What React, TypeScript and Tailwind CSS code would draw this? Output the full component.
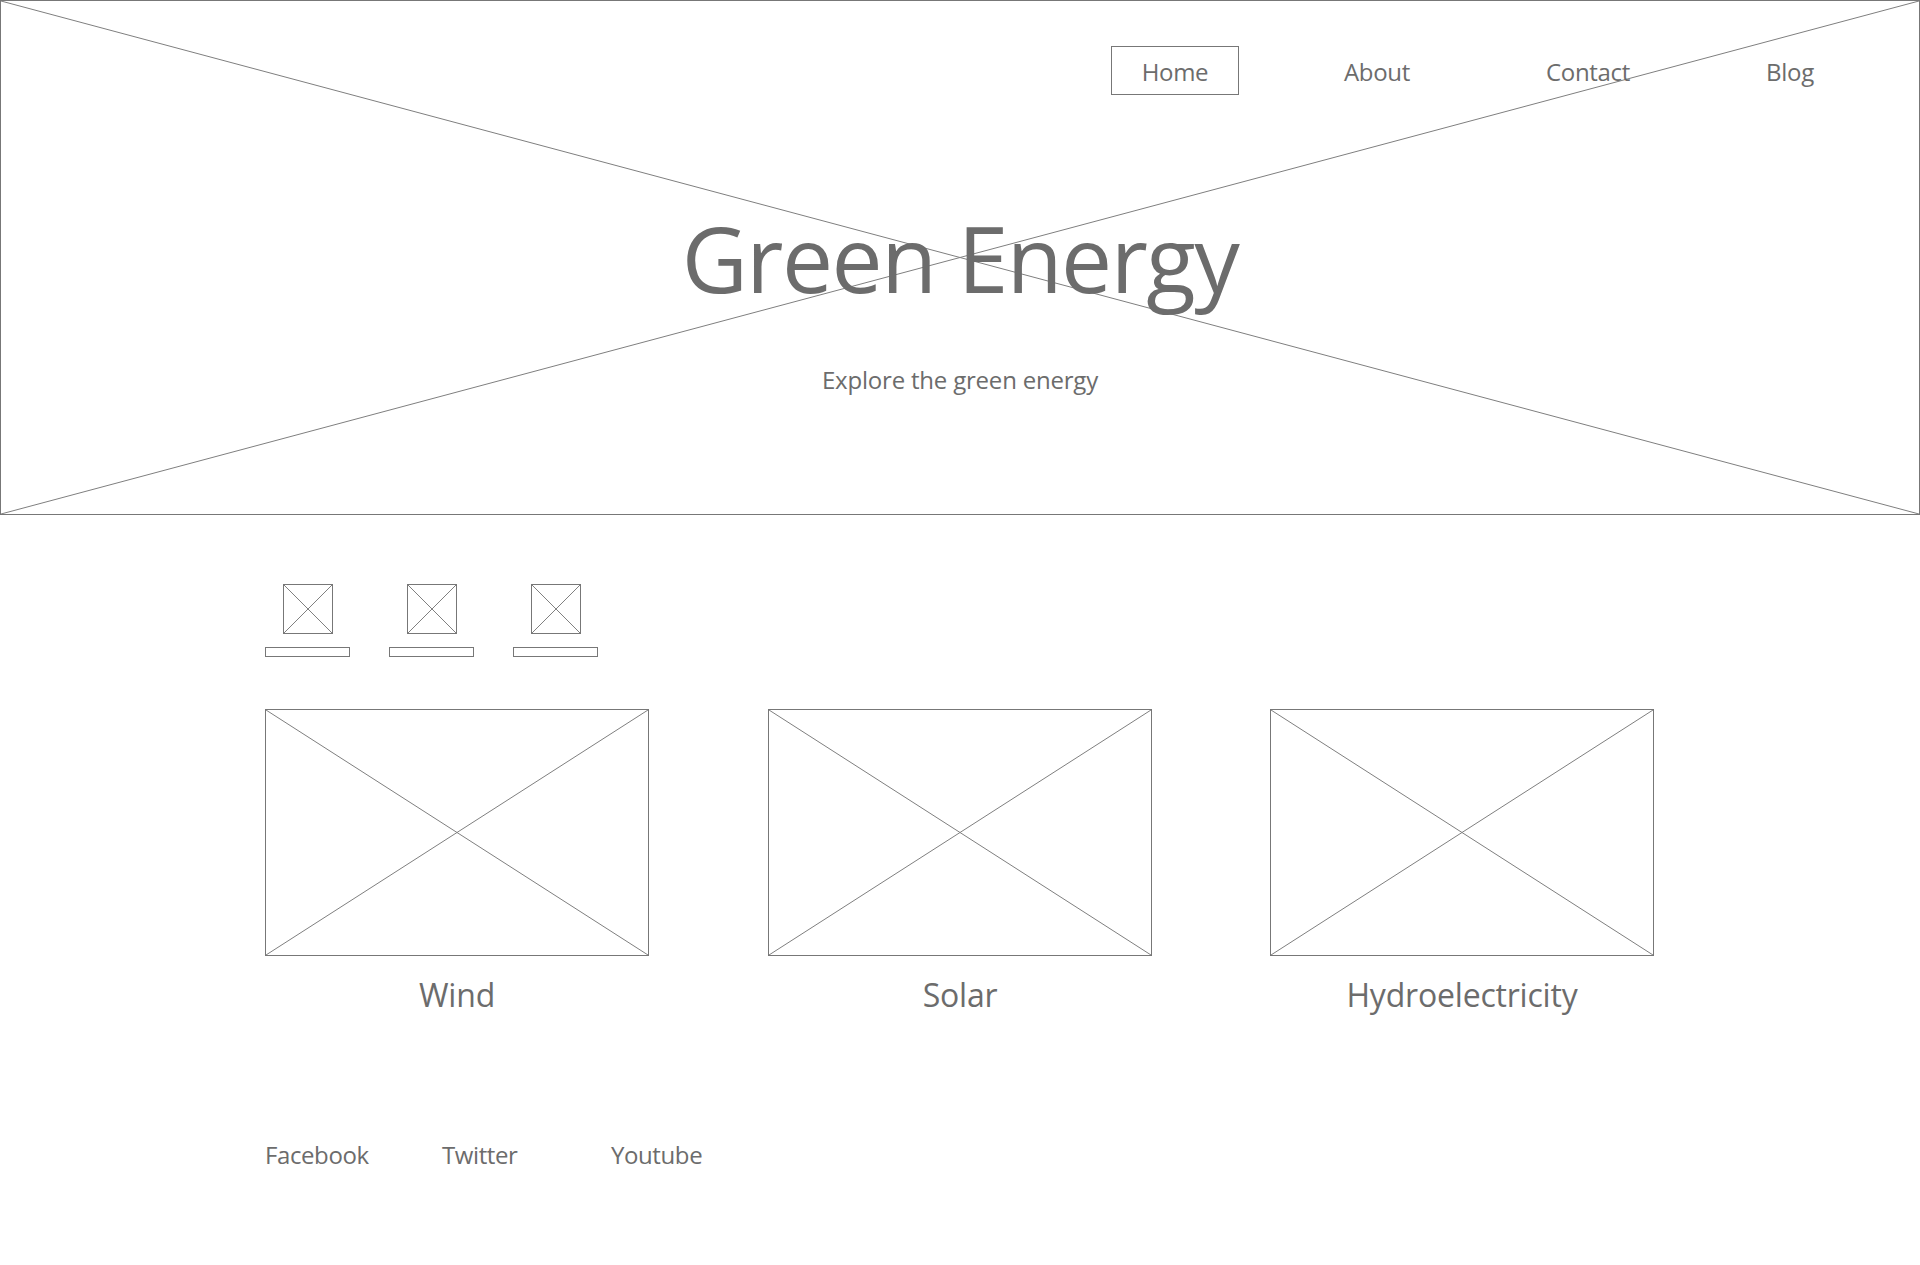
import React from 'react';

const INK = 'text-[#6c6c6c]';

// Placeholder box with an X through it, like a wireframe image slot.
function XBox({ className = '' }: { className?: string }) {
  return (
    <div className={`relative border border-[#777777] ${className}`}>
      <svg className="absolute inset-0 h-full w-full" viewBox="0 0 100 100" preserveAspectRatio="none">
        <line x1="0" y1="0" x2="100" y2="100" stroke="#7f7f7f" strokeWidth="1" vectorEffect="non-scaling-stroke" />
        <line x1="0" y1="100" x2="100" y2="0" stroke="#7f7f7f" strokeWidth="1" vectorEffect="non-scaling-stroke" />
      </svg>
    </div>
  );
}

const NAV = [
  { label: 'Home', ml: 'ml-[1110px]', active: true },
  { label: 'About', ml: 'ml-[74px]' },
  { label: 'Contact', ml: 'ml-[83px]' },
  { label: 'Blog', ml: 'ml-[74px]' },
];

const CARDS = [
  { label: 'Wind', ml: '' },
  { label: 'Solar', ml: 'ml-[119px]' },
  { label: 'Hydroelectricity', ml: 'ml-[118px]' },
];

export default function App() {
  return (
    <div className={`min-h-screen w-full bg-white ${INK}`} style={{ fontFamily: '"Open Sans", "Noto Sans", sans-serif' }}>
      {/* hero */}
      <header className="relative h-[515px] w-full border border-[#777777]">
        <svg className="absolute inset-0 h-full w-full" viewBox="0 0 100 100" preserveAspectRatio="none">
          <line x1="0" y1="0" x2="100" y2="100" stroke="#7f7f7f" strokeWidth="1" vectorEffect="non-scaling-stroke" />
          <line x1="0" y1="100" x2="100" y2="0" stroke="#7f7f7f" strokeWidth="1" vectorEffect="non-scaling-stroke" />
        </svg>
        <div className="relative flex flex-col">
          <nav className="flex pt-[45px]">
            {NAV.map((n) => (
              <div
                key={n.label}
                className={`${n.ml} flex h-[49px] w-[128px] items-center justify-center pt-[2px] text-[24px] tracking-[-0.3px] ${
                  n.active ? 'border border-[#777777]' : ''
                }`}
              >
                {n.label}
              </div>
            ))}
          </nav>
          <h1 className="mt-[118px] text-center text-[91px] leading-none tracking-[-1.5px]">Green Energy</h1>
          <p className="mt-[64px] text-center text-[24px] leading-none tracking-[-0.2px]">Explore the green energy</p>
        </div>
      </header>

      <main className="pl-[265px]">
        {/* small icon row */}
        <div className="mt-[69px] flex gap-[39px]">
          {[0, 1, 2].map((i) => (
            <div key={i} className="flex w-[85px] flex-col items-center">
              <XBox className="h-[50px] w-[50px]" />
              <div className="mt-[13px] h-[10px] w-[85px] border border-[#777777]" />
            </div>
          ))}
        </div>

        {/* cards */}
        <div className="mt-[52px] flex">
          {CARDS.map((c) => (
            <div key={c.label} className={`${c.ml} flex w-[384px] flex-col items-center`}>
              <XBox className="h-[247px] w-[384px]" />
              <p className="mt-[20px] text-[32px] leading-[1.2] tracking-[-0.2px]">{c.label}</p>
            </div>
          ))}
        </div>

        {/* footer links */}
        <footer className="mt-[127px] flex text-[24px] leading-[1.2] tracking-[-0.4px]">
          <span className="w-[177px]">Facebook</span>
          <span className="w-[169px]">Twitter</span>
          <span>Youtube</span>
        </footer>
      </main>
    </div>
  );
}
